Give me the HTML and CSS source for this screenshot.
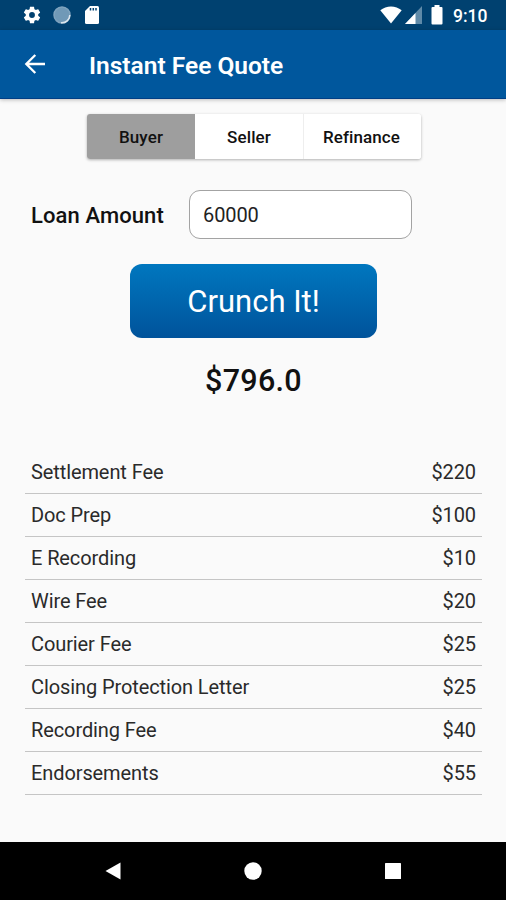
FILE: index.html
```html
<!DOCTYPE html>
<html lang="en">
<head>
<meta charset="utf-8">
<title>Instant Fee Quote</title>
<link rel="stylesheet" href="styles.css">
</head>
<body>
<div class="status">
  <svg class="gear" width="20" height="20" viewBox="0 0 24 24" fill="#fff"><path d="M19.43 12.98c.04-.32.07-.64.07-.98s-.03-.66-.07-.98l2.11-1.65c.19-.15.24-.42.12-.64l-2-3.46c-.12-.22-.39-.3-.61-.22l-2.49 1c-.52-.4-1.08-.73-1.69-.98l-.38-2.65C14.46 2.180 14.25 2 14 2h-4c-.25 0-.46.18-.49.42l-.38 2.65c-.61.25-1.170.59-1.690.98l-2.490-1c-.23-.09-.49 0-.61.22l-2 3.460c-.13.22-.07.49.12.64l2.110 1.650c-.04.32-.07.65-.07.98s.03.66.07.98l-2.110 1.650c-.19.15-.24.42-.12.64l2 3.460c.12.22.39.3.61.22l2.490-1c.52.4 1.080.73 1.690.98l.38 2.650c.03.24.24.42.49.42h4c.25 0 .46-.18.49-.42l.38-2.650c.61-.25 1.170-.59 1.690-.98l2.490 1c.23.09.49 0 .61-.22l2-3.460c.12-.22.07-.49-.12-.64zM12 15.500a3.500 3.500 0 1 1 0-7 3.500 3.500 0 0 1 0 7z"/></svg>
  <svg class="sync" width="18" height="18" viewBox="0 0 18 18"><circle cx="9" cy="9" r="8" fill="#7099b7" stroke="#7fa3be" stroke-width="1.500"/><path d="M16.800 9A8 8 0 0 1 8 16.800" fill="none" stroke="#dce6ee" stroke-width="1.500"/></svg>
  <svg class="card" width="16" height="20" viewBox="0 0 16 20"><path fill="#fff" d="M6 1h7.500q1.500 0 1.500 1.500v15q0 1.500-1.500 1.500h-11q-1.500 0-1.500-1.500V6z"/><path d="M6.500 3v2.500M9.300 3v2.500M12 3v2.500" stroke="#004170" stroke-width="1.500"/></svg>
  <span class="grow"></span>
  <svg class="wifi" width="22" height="18" viewBox="0 0 22 18"><path fill="#fff" d="M11 17.500L.3 4.300Q5 .5 11 .5t10.700 3.800z"/></svg>
  <svg class="signal" width="17" height="18" viewBox="0 0 17 18"><path fill="#5f8aa8" d="M17 0v18H0z"/><path fill="#fff" d="M10.500 6.900V18H0z"/></svg>
  <svg class="battery" width="12" height="20" viewBox="0 0 12 20"><path fill="#fff" d="M3.500 0h5v2H10.500q1 0 1 1v15.500q0 1-1 1h-9q-1 0-1-1V3q0-1 1-1h2z"/></svg>
  <span class="clock">9:10</span>
</div>
<header class="appbar">
  <svg width="22" height="22" viewBox="0 0 22 22" fill="none" stroke="#fff" stroke-width="2.300"><path d="M21 11H3M11.300 2L2.300 11l9 9"/></svg>
  <h1>Instant Fee Quote</h1>
</header>
<main>
  <div class="tabs">
    <button class="tab on">Buyer</button><button class="tab">Seller</button><button class="tab wide">Refinance</button>
  </div>
  <div class="loan">
    <label for="amount">Loan Amount</label>
    <input id="amount" type="text" value="60000">
  </div>
  <button class="crunch">Crunch It!</button>
  <div class="total">$796.0</div>
  <ul class="fees">
    <li><span>Settlement Fee</span><span>$220</span></li>
    <li><span>Doc Prep</span><span>$100</span></li>
    <li><span>E Recording</span><span>$10</span></li>
    <li><span>Wire Fee</span><span>$20</span></li>
    <li><span>Courier Fee</span><span>$25</span></li>
    <li><span>Closing Protection Letter</span><span>$25</span></li>
    <li><span>Recording Fee</span><span>$40</span></li>
    <li><span>Endorsements</span><span>$55</span></li>
  </ul>
</main>
<nav class="navbar">
  <svg width="18" height="18" viewBox="0 0 18 18"><path fill="#fff" d="M16.500.5v17L1.500 9z"/></svg>
  <svg width="18" height="18" viewBox="0 0 18 18"><circle cx="9" cy="9" r="8.700" fill="#fff"/></svg>
  <svg width="18" height="18" viewBox="0 0 18 18"><rect x="1" y="1" width="16" height="16" rx=".6" fill="#fff"/></svg>
</nav>
</body>
</html>
```
FILE: styles.css
```css
* { box-sizing: border-box; }
body {
  margin: 0;
  width: 506px;
  height: 900px;
  display: flex;
  flex-direction: column;
  overflow: hidden;
  background: #fafafa;
  color: #111;
  font-family: Roboto, "Liberation Sans", sans-serif;
}
svg { display: block; flex: none; }
button, input { font-family: inherit; border: 0; padding: 0; }
.status {
  flex: none;
  height: 30px;
  display: flex;
  align-items: center;
  padding: 0 18px 0 22px;
  background: #004170;
}
.sync { margin-left: 11px; }
.card { margin-left: 13px; }
.grow { flex: 1; }
.signal { margin-left: 3px; }
.battery { margin-left: 9px; }
.clock {
  width: 35px;
  margin-left: 10px;
  padding-top: 2px;
  color: #fff;
  font-size: 17.5px;
  font-weight: 500;
  line-height: 20px;
  white-space: nowrap;
}
.appbar {
  flex: none;
  height: 69px;
  display: flex;
  align-items: center;
  padding-left: 24px;
  background: #00579d;
  border-bottom: 1px solid #003f86;
  box-shadow: 0 1px 4px rgba(0, 0, 0, .25);
}
.appbar h1 {
  margin: 3px 0 0 43px;
  color: #fff;
  font-size: 24.5px;
  font-weight: 600;
  line-height: 28px;
  white-space: nowrap;
}
main {
  flex: 1;
  display: flex;
  flex-direction: column;
  padding-top: 15px;
}
.tabs {
  display: flex;
  width: 334px;
  height: 45px;
  margin-left: 87px;
  border-radius: 3px;
  overflow: hidden;
  background: #fff;
  box-shadow: 0 1px 3px rgba(0, 0, 0, .3);
}
.tab {
  width: 108px;
  background: #fff;
  color: #111;
  font-size: 17px;
  font-weight: 500;
  letter-spacing: .1px;
}
.tab + .tab + .tab { border-left: 1px solid #eee; }
.tab.on { background: #9e9e9e; }
.tab.wide { width: 118px; padding-right: 2px; }
.loan {
  display: flex;
  align-items: center;
  margin: 31px 0 0 31px;
}
.loan label {
  width: 158px;
  padding-top: 2px;
  font-size: 22px;
  font-weight: 500;
  letter-spacing: .1px;
  white-space: nowrap;
}
.loan input {
  width: 223px;
  height: 49px;
  padding: 0 13px;
  border: 1px solid #a3a3a3;
  border-radius: 11px;
  background: #fff;
  color: #222;
  font-size: 20px;
  letter-spacing: -.1px;
}
.crunch {
  width: 247px;
  height: 74px;
  margin: 25px 0 0 130px;
  border-radius: 12px;
  background: linear-gradient(#0077bf, #00539b);
  color: #fff;
  font-size: 31px;
  letter-spacing: 0;
}
.total {
  margin-top: 25px;
  padding-left: 1px;
  text-align: center;
  font-size: 30.5px;
  font-weight: 500;
  line-height: 36px;
  letter-spacing: .3px;
}
.fees {
  list-style: none;
  margin: 52px 24px 0 25px;
  padding: 0;
  color: #2a2a2a;
  font-size: 20px;
}
.fees li {
  display: flex;
  justify-content: space-between;
  align-items: center;
  height: 43px;
  padding: 0 6px;
  border-bottom: 1.5px solid #c5c5c5;
  letter-spacing: -.1px;
}
.navbar {
  flex: none;
  height: 58px;
  display: flex;
  justify-content: space-between;
  align-items: center;
  padding: 0 104px;
  background: #000;
}
```
